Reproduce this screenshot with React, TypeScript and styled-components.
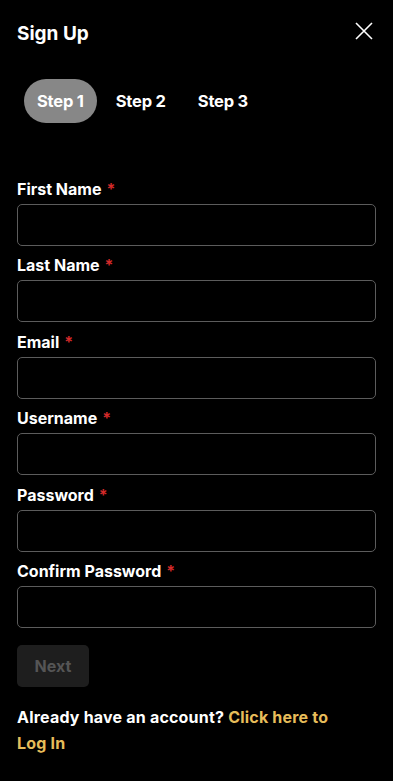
import styled, { createGlobalStyle } from "styled-components";

const GlobalStyle = createGlobalStyle`
    body {
        margin: 0;
        background: #000;
        font-family: Inter, "Noto Sans", sans-serif;
        color: #fff;
    }
`;

const Page = styled.div`
    padding: 0 17px 30px;
    background: #000;
    min-height: 781px;
    box-sizing: border-box;
`;

const Header = styled.div`
    height: 66px;
    display: flex;
    align-items: center;
    justify-content: space-between;
`;

const Title = styled.h1`
    margin: 0;
    font-size: 19px;
    font-weight: 700;
`;

const CloseButton = styled.button`
    background: none;
    border: none;
    padding: 0;
    margin: 0 2px 4px 0;
    width: 20px;
    height: 20px;
    display: flex;
    align-items: center;
    justify-content: center;
    color: #fff;
`;

const Steps = styled.div`
    display: flex;
    gap: 6px;
    margin: 13px 0 0 7px;
`;

const StepPill = styled.div<{ $active?: boolean }>`
    height: 44px;
    padding: 0 13px;
    display: flex;
    align-items: center;
    border-radius: 22px;
    font-size: 16.5px;
    font-weight: 700;
    letter-spacing: -0.2px;
    background: ${(p) => (p.$active ? "#878787" : "transparent")};
`;

const Form = styled.form`
    margin-top: 56px;
    display: flex;
    flex-direction: column;
    gap: 9.4px;
`;

const Field = styled.div`
    display: flex;
    flex-direction: column;
    gap: 5px;
`;

const Label = styled.label`
    font-size: 16px;
    line-height: 20px;
    font-weight: 700;
`;

const Star = styled.span`
    color: #d42a2a;
    margin-left: 5px;
`;

const Input = styled.input`
    height: 42px;
    box-sizing: border-box;
    background: #000;
    border: 1px solid #5c5c5c;
    border-radius: 5px;
    color: #fff;
    font-size: 15px;
    padding: 0 12px;
    outline: none;
`;

const NextButton = styled.button`
    margin-top: 8px;
    align-self: flex-start;
    width: 72px;
    height: 42px;
    border: none;
    border-radius: 5px;
    background: #1e1e1e;
    color: #555;
    font-family: inherit;
    font-size: 16px;
    font-weight: 700;
`;

const Footer = styled.p`
    margin: 17px 0 0;
    max-width: 330px;
    font-size: 16px;
    line-height: 26px;
    font-weight: 700;
    letter-spacing: 0.2px;
`;

const LoginLink = styled.a`
    color: #e7bd5a;
    text-decoration: none;
`;

const fields = [
    { id: "first", label: "First Name", type: "text" },
    { id: "last", label: "Last Name", type: "text" },
    { id: "email", label: "Email", type: "email" },
    { id: "username", label: "Username", type: "text" },
    { id: "password", label: "Password", type: "password" },
    { id: "confirm", label: "Confirm Password", type: "password" },
];

const App = () => {
    return (
        <Page>
            <GlobalStyle />
            <Header>
                <Title>Sign Up</Title>
                <CloseButton aria-label="Close">
                    <svg width="18" height="18" viewBox="0 0 18 18" fill="none" stroke="currentColor" strokeWidth="1.6">
                        <path d="M1 1L17 17M17 1L1 17" />
                    </svg>
                </CloseButton>
            </Header>
            <Steps>
                <StepPill $active>Step 1</StepPill>
                <StepPill>Step 2</StepPill>
                <StepPill>Step 3</StepPill>
            </Steps>
            <Form onSubmit={(e) => e.preventDefault()}>
                {fields.map((f) => (
                    <Field key={f.id}>
                        <Label htmlFor={f.id}>
                            {f.label}
                            <Star>*</Star>
                        </Label>
                        <Input id={f.id} type={f.type} />
                    </Field>
                ))}
                <NextButton type="submit" disabled>
                    Next
                </NextButton>
            </Form>
            <Footer>
                Already have an account? <LoginLink href="#">Click here to Log In</LoginLink>
            </Footer>
        </Page>
    );
};

export default App;
